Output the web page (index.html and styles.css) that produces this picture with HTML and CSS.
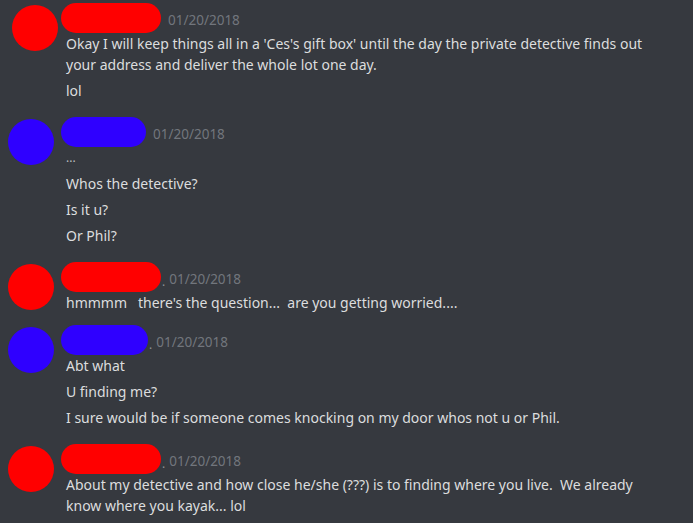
FILE: index.html
```html
<!DOCTYPE html>
<html>
<head>
<meta charset="utf-8">
<link rel="stylesheet" href="styles.css">
</head>
<body>
<div class="chat">
  <div class="msg msg-first">
    <div class="avatar red"></div>
    <div class="content">
      <div class="header"><span class="pill red w100"></span><span class="time">01/20/2018</span></div>
      <p>Okay I will keep things all in a 'Ces's gift box' until the day the private detective finds out your address and deliver the whole lot one day.</p>
      <p>lol</p>
    </div>
  </div>
  <div class="msg">
    <div class="avatar blue"></div>
    <div class="content">
      <div class="header"><span class="pill blue w85"></span><span class="time">01/20/2018</span></div>
      <p class="dots">...</p>
      <p>Whos the detective?</p>
      <p>Is it u?</p>
      <p>Or Phil?</p>
    </div>
  </div>
  <div class="msg">
    <div class="avatar red"></div>
    <div class="content">
      <div class="header"><span class="pill red w100"></span><span class="dot">.</span><span class="time">01/20/2018</span></div>
      <p>hmmmm &nbsp; there's the question... &nbsp;are you getting worried....</p>
    </div>
  </div>
  <div class="msg msg-tight">
    <div class="avatar blue"></div>
    <div class="content">
      <div class="header"><span class="pill blue w87"></span><span class="dot">.</span><span class="time">01/20/2018</span></div>
      <p>Abt what</p>
      <p>U finding me?</p>
      <p>I sure would be if someone comes knocking on my door whos not u or Phil.</p>
    </div>
  </div>
  <div class="msg">
    <div class="avatar red"></div>
    <div class="content">
      <div class="header"><span class="pill red w100"></span><span class="dot">.</span><span class="time">01/20/2018</span></div>
      <p>About my detective and how close he/she (???) is to finding where you live. &nbsp;We already know where you kayak... lol</p>
    </div>
  </div>
</div>
</body>
</html>
```

FILE: styles.css
```css
html, body {
  margin: 0;
  padding: 0;
  background: #36393f;
}
body {
  width: 693px;
  height: 523px;
  overflow: hidden;
  font-family: "Noto Sans", "Open Sans", sans-serif;
  color: #dcddde;
}
.chat {
  padding-top: 3px;
  display: flex;
  flex-direction: column;
}
.msg {
  display: flex;
  gap: 12px;
  padding-left: 8px;
  padding-right: 26px;
  margin-top: 16px;
}
.msg-first {
  margin-top: 0;
}
.msg-tight {
  margin-top: 12px;
}
.avatar {
  width: 46px;
  height: 46px;
  border-radius: 50%;
  flex: none;
  margin-top: 2px;
}
.msg-first .avatar {
  margin-left: 4px;
  margin-right: -4px;
}
.red { background: #ff0000; }
.blue { background: #2f00ff; }
.content {
  flex: 1;
  min-width: 0;
}
.header {
  height: 30px;
  display: flex;
  align-items: center;
}
.pill {
  height: 30px;
  border-radius: 15px;
  margin-left: -5px;
  flex: none;
}
.w100 { width: 100px; }
.w85 { width: 85px; }
.w87 { width: 87px; }
.dot {
  font-size: 12px;
  color: #8e9297;
  margin-left: 1px;
  margin-top: 8px;
}
.time {
  font-size: 13.5px;
  color: #72767d;
  margin-left: 7px;
  margin-top: 4px;
}
.dot + .time {
  margin-left: 4px;
}
p {
  margin: 0;
  font-size: 14px;
  line-height: 21px;
}
p + p {
  margin-top: 5px;
}
.dots {
  font-size: 12px;
  color: #b9bbbe;
}
```
